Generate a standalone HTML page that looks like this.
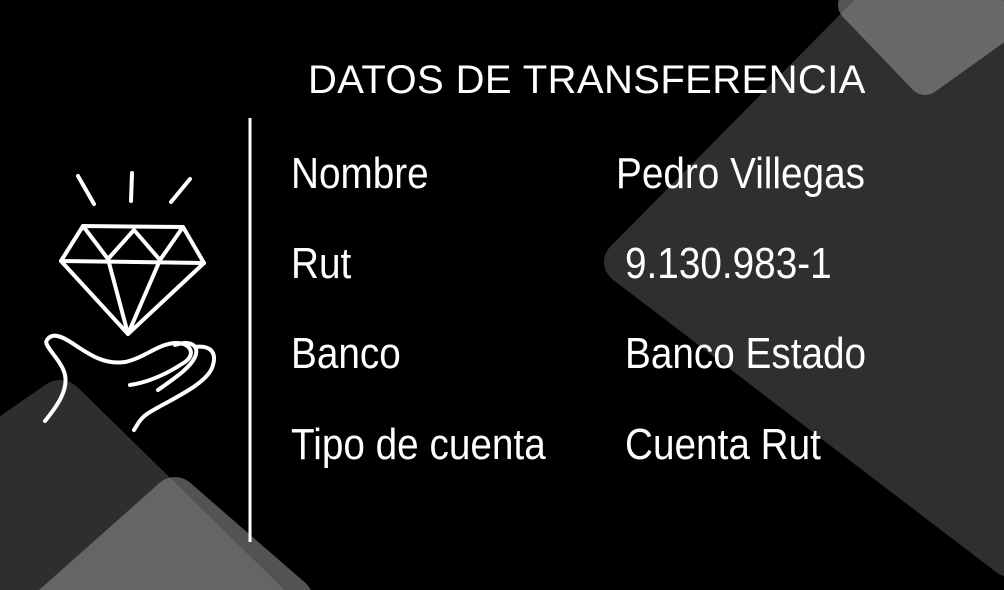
<!DOCTYPE html>
<html><head><meta charset="utf-8"><style>
html,body{margin:0;padding:0;background:#000;overflow:hidden;width:1004px;height:590px;}
#c{position:relative;width:1004px;height:590px;overflow:hidden;background:#000;font-family:"Liberation Sans",sans-serif;color:#fff;}
svg{position:absolute;left:0;top:0;display:block;}
.t{position:absolute;white-space:nowrap;transform-origin:0 0;line-height:1;}
.l{font-size:44px;transform:scaleX(0.88);}
</style></head><body><div id="c">
<svg width="1004" height="590" viewBox="0 0 1004 590">
  <g stroke-linejoin="round">
    <polygon points="626,262 925,-40 1300,300 1010,555" fill="#2f2f2f" stroke="#2f2f2f" stroke-width="44"/>
    <g opacity="0.55"><polygon points="855,5 925,-65 1020,10 925,78" fill="#9a9a9a" stroke="#9a9a9a" stroke-width="34"/></g>
    <polygon points="-120,530 60,405 300,640 60,800" fill="#2e2e2e" stroke="#2e2e2e" stroke-width="50"/>
    <g opacity="0.6"><polygon points="40,620 175,500 290,600 175,720" fill="#8a8a8a" stroke="#8a8a8a" stroke-width="46"/></g>
  </g>
  <line x1="250" y1="118" x2="250" y2="542" stroke="#fff" stroke-width="3"/>
  <g fill="none" stroke="#fff" stroke-width="4" stroke-linecap="round" stroke-linejoin="round">
    <line x1="78" y1="176" x2="94" y2="204"/>
    <line x1="132" y1="173" x2="131" y2="201"/>
    <line x1="190" y1="179" x2="171" y2="202"/>
    <polygon points="83,226 183,227 204,263 128,334 61,261"/>
    <polyline points="83,226 108,259 134,230 160,260 183,227"/>
    <line x1="61" y1="261" x2="204" y2="263"/>
    <polyline points="108,259 128,334 160,260"/>
    <path d="M45,421 C58,405 68,390 65,375 C62,360 42,345 47,340 C52,332 62,336 75,345 C90,355 105,365 125,362 C145,358 160,342 178,343 C192,344 195,355 185,362 C170,372 150,382 130,385"/>
    <path d="M175,345 C190,340 200,345 195,357 C190,368 175,378 158,390"/>
    <path d="M195,347 C210,345 218,352 212,368 C205,385 170,400 150,412 C140,418 138,424 134,430"/>
  </g>
</svg>
<div class="t" style="left:308px;top:60px;font-size:40px;letter-spacing:0.4px;">DATOS DE TRANSFERENCIA</div>
<div class="t l" style="left:291px;top:152px;">Nombre</div>
<div class="t l" style="left:291px;top:242px;">Rut</div>
<div class="t l" style="left:291px;top:332px;">Banco</div>
<div class="t l" style="left:291px;top:423px;">Tipo de cuenta</div>
<div class="t l" style="left:616px;top:152px;">Pedro Villegas</div>
<div class="t l" style="left:625px;top:242px;">9.130.983-1</div>
<div class="t l" style="left:625px;top:332px;">Banco Estado</div>
<div class="t l" style="left:625px;top:423px;">Cuenta Rut</div>
</div></body></html>
